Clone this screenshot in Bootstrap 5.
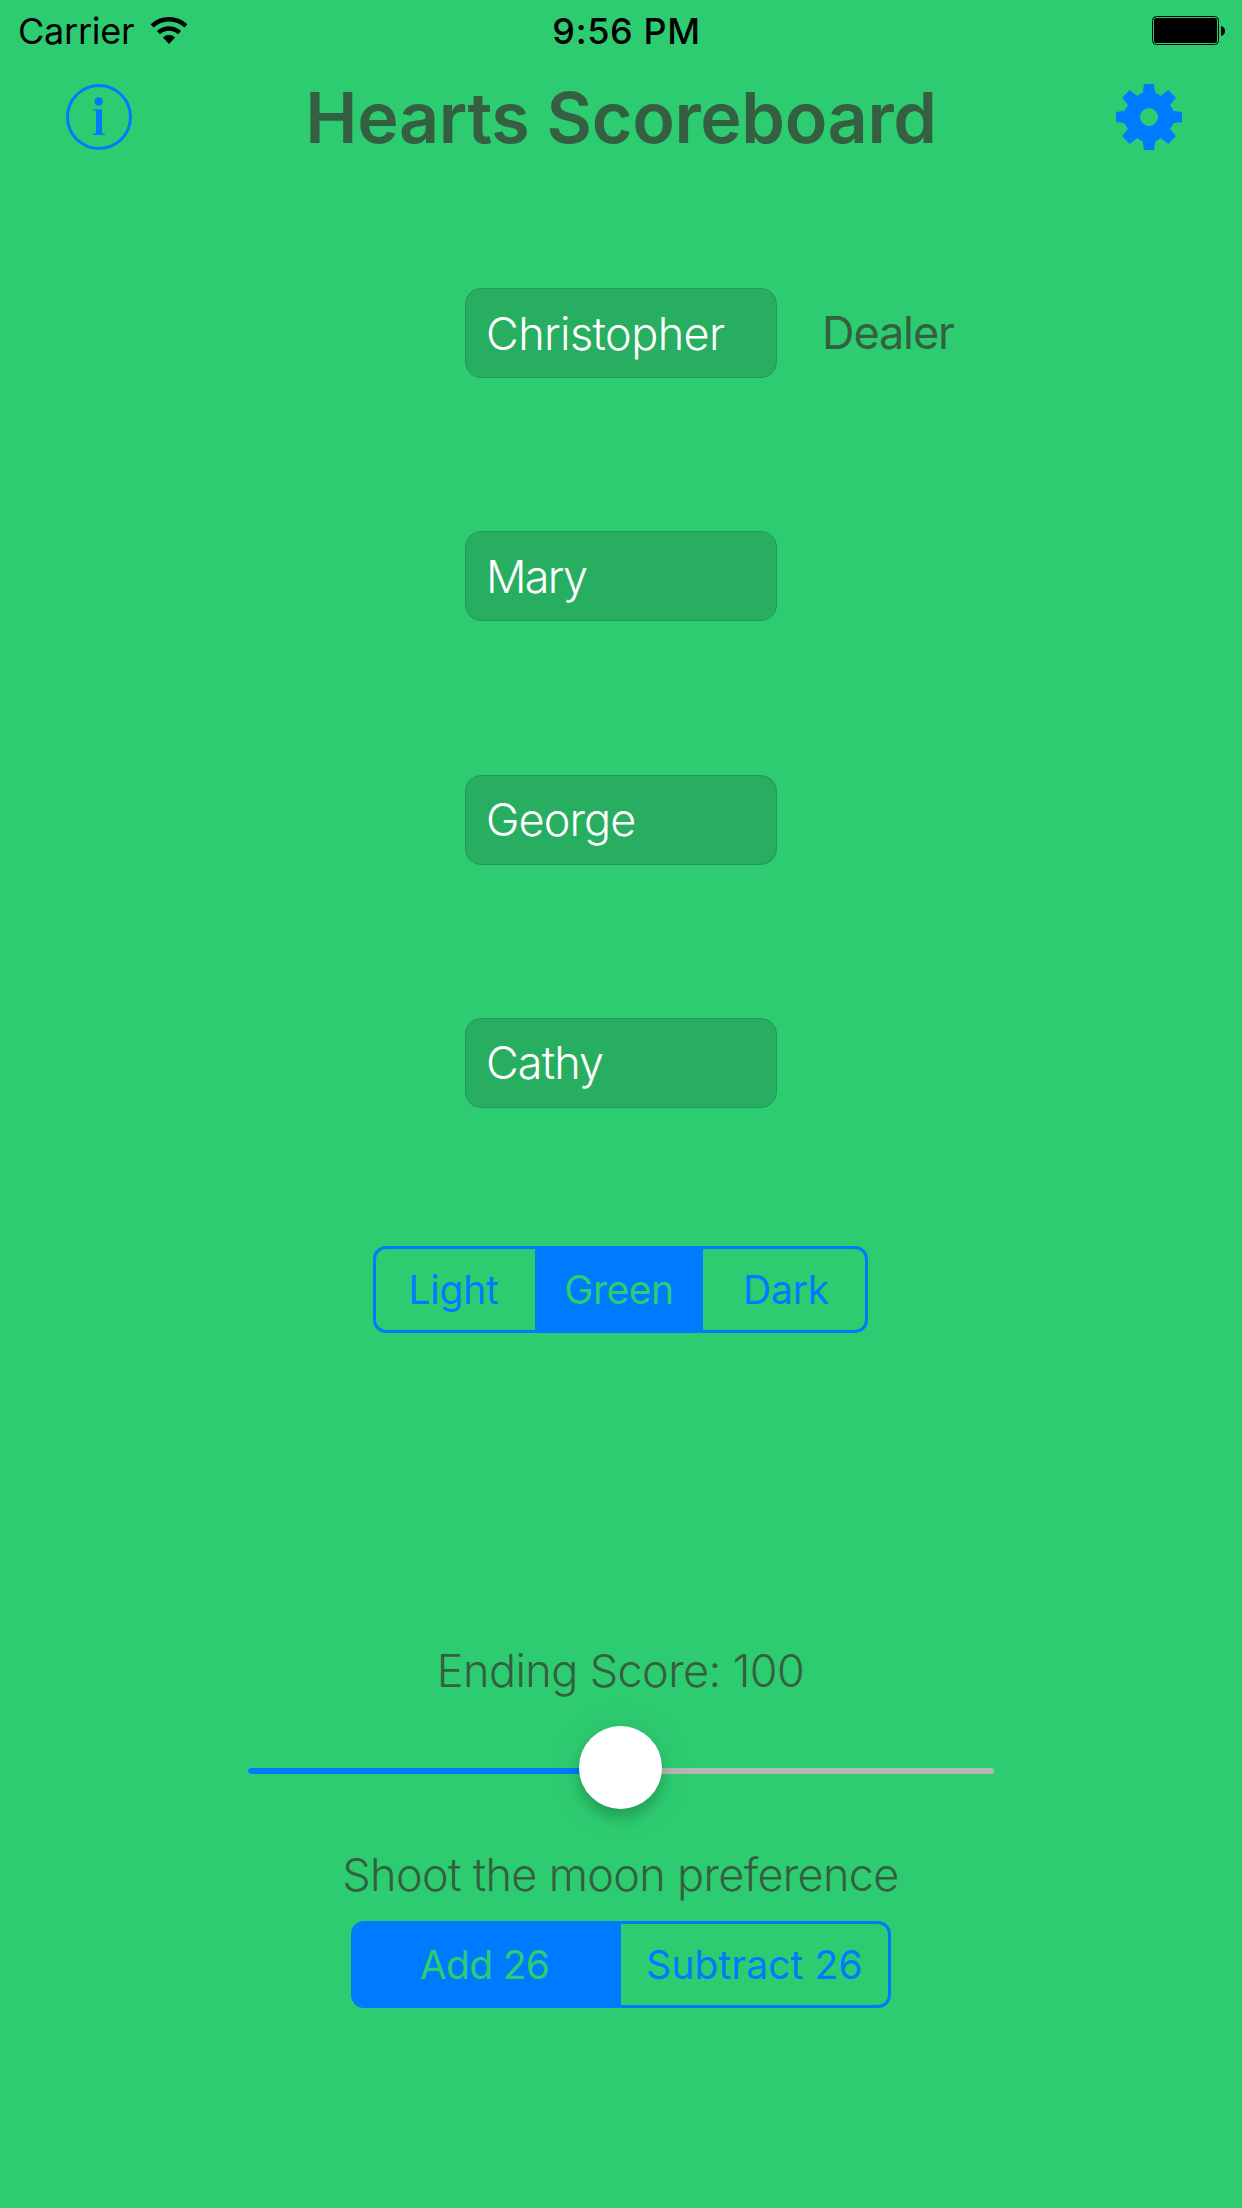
<!DOCTYPE html>
<html lang="en">
<head>
<meta charset="utf-8">
<meta name="viewport" content="width=device-width, initial-scale=1">
<title>Hearts Scoreboard</title>
<link rel="stylesheet" href="https://cdn.jsdelivr.net/npm/bootstrap@5.3.0/dist/css/bootstrap.min.css">
<style>
  :root { --felt: #2ecc71; --ink: #345f41; --tint: #007aff; }
  body { background: var(--felt); color: var(--ink); font-family: Inter, "Liberation Sans", sans-serif; font-size: 45px; line-height: 56px; min-height: 2208px; overflow: hidden; }
  svg { display: block; flex: none; }
  .three-col { display: grid; grid-template-columns: 1fr auto 1fr; align-items: center; }
  .status-bar { height: 62px; padding: 0 17px 0 18px; font-size: 36px; color: #000; }
  .carrier { letter-spacing: -.24px; margin-right: 15.5px; }
  .clock { font-weight: 500; letter-spacing: .6px; padding-left: 10px; }
  .title-bar { height: 110px; padding: 0 60px 0 66px; }
  .title-bar h1 { font-size: 70px; font-weight: 600; line-height: 84px; letter-spacing: -.36px; padding: 1px 6px 0 0; }
  .icon-btn { color: var(--tint); line-height: 0; }
  .players { margin-top: 116px; row-gap: 153.33px; }
  .player { display: grid; grid-template-columns: 465px 312px auto; }
  .player .form-control { grid-column: 2; height: 90px; padding: 0 20px; border: 1px solid #24985a; border-radius: 16px; background: #27ae60; color: #fff; font-size: 45px; font-weight: 300; letter-spacing: -.6px; }
  .player .form-control.tight { letter-spacing: -1.7px; }
  .player .form-control.snug { letter-spacing: -.9px; }
  .dealer { margin-left: 45px; letter-spacing: -1.1px; }
  .segments { height: 87px; border: 3px solid var(--tint); border-radius: 13px; overflow: hidden; }
  .segments .btn { border: 0; border-radius: 0; padding: 0; color: var(--tint); font-size: 39px; line-height: 81px; letter-spacing: -.2px; }
  .segments .btn.active { background: var(--tint); color: var(--felt); letter-spacing: -.45px; }
  .segments .nudged { padding-right: 4px; }
  .theme { width: 495px; margin: 138px 1px 0 0; }
  .moon { width: 540px; margin-top: 18px; }
  .moon .btn { letter-spacing: .1px; }
  .moon .btn.active { letter-spacing: -.7px; padding-right: 6px; }
  .setting-label { font-weight: 300; }
  .ending { margin: 310px 1px 0 0; letter-spacing: -.6px; }
  .shoot { margin: 37px 1px 0 0; letter-spacing: -.67px; }
  .slider { width: 746px; height: 84px; margin-top: 27px; }
  .slider .rail { height: 6px; margin-top: 6px; border-radius: 3px; background: #b6b6b6; }
  .slider .rail-fill { height: 6px; border-radius: 3px; background: var(--tint); }
  .knob { position: absolute; top: 0; left: 50%; width: 83px; height: 83px; margin-left: -42px; border-radius: 50%; background: #fff; box-shadow: 0 9px 12px rgba(0,0,0,.17), 0 3px 36px rgba(0,0,0,.1); }
</style>
</head>
<body>
<header>
  <div class="status-bar three-col">
    <div class="d-flex align-items-center">
      <span class="carrier">Carrier</span>
      <svg width="38" height="30" viewBox="-19 -28 38 30" fill="none" stroke="#000">
        <path d="M-16.9-18.1A24.8 24.8 0 0 1 16.9-18.1" stroke-width="4.3"/>
        <path d="M-10.6-11.4A15.6 15.6 0 0 1 10.6-11.4" stroke-width="4.4"/>
        <path d="M0 0L-6.1-6.6A9 9 0 0 1 6.1-6.6Z" fill="#000" stroke="none"/>
      </svg>
    </div>
    <span class="clock">9:56 PM</span>
    <svg class="ms-auto" width="73" height="30" viewBox="0 0 73 30">
      <rect x=".5" y=".5" width="66" height="28" rx="4" fill="none" stroke="#000"/>
      <rect x="2" y="2" width="63" height="25" rx="2.5"/>
      <path d="M69 10Q73 11 73 15T69 20Z"/>
    </svg>
  </div>
  <div class="title-bar three-col">
    <a class="icon-btn" href="#" aria-label="Info">
      <svg width="66" height="66" viewBox="0 0 66 66" fill="currentColor">
        <circle cx="33" cy="33" r="31.5" fill="none" stroke="currentColor" stroke-width="3"/>
        <circle cx="32.7" cy="17.5" r="4.3"/>
        <path d="M27 25.2H36V49.6L39 50V51H27V50L30 49.6V26.8L27 26.4Z"/>
      </svg>
    </a>
    <h1 class="m-0">Hearts Scoreboard</h1>
    <a class="icon-btn ms-auto" href="#" aria-label="Settings">
      <svg width="66" height="66" viewBox="-33 -33 66 66" fill="currentColor">
        <path fill-rule="evenodd" d="M-5-33H5L6.3-24.3Q9-23.5 11.7-21L19.3-27 26.9-19.3 21-11.7Q23.5-9 24.3-6.3L33-5V5L24.3 6.3Q23.5 9 21 11.7L26.9 19.3 19.3 27 11.7 21Q9 23.5 6.3 24.3L5 33H-5L-6.3 24.3Q-9 23.5-11.7 21L-19.3 27-26.9 19.3-21 11.7Q-23.5 9-24.3 6.3L-33 5V-5L-24.3-6.3Q-23.5-9-21-11.7L-26.9-19.3-19.3-27-11.7-21Q-9-23.5-6.3-24.3ZM9 0A9 9 0 1 0-9 0A9 9 0 1 0 9 0Z"/>
      </svg>
    </a>
  </div>
</header>
<main class="d-flex flex-column align-items-center">
  <section class="players d-flex flex-column w-100">
    <div class="player align-items-center"><input class="form-control" value="Christopher" aria-label="Player 1"><span class="dealer">Dealer</span></div>
    <div class="player"><input class="form-control tight" value="Mary" aria-label="Player 2"></div>
    <div class="player"><input class="form-control snug" value="George" aria-label="Player 3"></div>
    <div class="player"><input class="form-control snug" value="Cathy" aria-label="Player 4"></div>
  </section>
  <div class="segments theme d-flex">
    <button class="btn nudged" style="width:159px">Light</button>
    <button class="btn active" style="width:168px">Green</button>
    <button class="btn flex-fill ps-1">Dark</button>
  </div>
  <div class="setting-label ending">Ending Score: 100</div>
  <div class="slider position-relative d-flex flex-column justify-content-center">
    <div class="rail"><div class="rail-fill" style="width:50%"></div></div>
    <div class="knob"></div>
  </div>
  <div class="setting-label shoot">Shoot the moon preference</div>
  <div class="segments moon d-flex">
    <button class="btn active w-50">Add 26</button>
    <button class="btn w-50">Subtract 26</button>
  </div>
</main>
<script src="https://cdn.jsdelivr.net/npm/bootstrap@5.3.0/dist/js/bootstrap.bundle.min.js"></script>
</body>
</html>
